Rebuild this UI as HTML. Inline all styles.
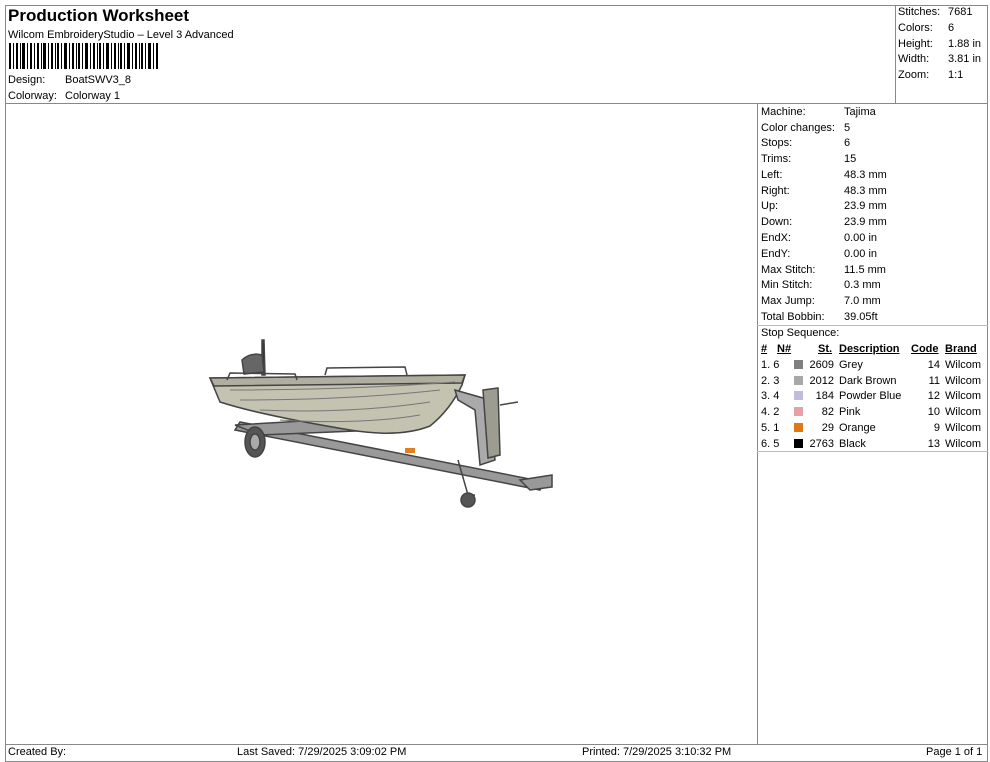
<!DOCTYPE html>
<html><head><meta charset="utf-8"><style>
body{margin:0;width:990px;height:762px;background:#fff;font-family:"Liberation Sans",Arial,sans-serif;color:#000;position:relative;overflow:hidden}
.a{position:absolute;font-size:11px;line-height:16px;white-space:nowrap}
.l{position:absolute;background:#888}
</style></head><body>
<div class="l" style="left:5px;top:5px;width:983px;height:1px"></div>
<div class="l" style="left:5px;top:5px;width:1px;height:757px"></div>
<div class="l" style="left:987px;top:5px;width:1px;height:757px"></div>
<div class="l" style="left:5px;top:103px;width:983px;height:1px"></div>
<div class="l" style="left:895px;top:5px;width:1px;height:98px"></div>
<div class="l" style="left:757px;top:103px;width:1px;height:641px"></div>
<div class="l" style="left:5px;top:744px;width:983px;height:1px"></div>
<div class="l" style="left:5px;top:761px;width:983px;height:1px"></div>
<div class="l" style="left:757px;top:325px;width:231px;height:1px;background:#bbb"></div>
<div class="l" style="left:757px;top:451px;width:231px;height:1px;background:#bbb"></div>

<div class="a" style="left:8px;top:6px;font-size:17px;font-weight:bold;line-height:20px">Production Worksheet</div>
<div class="a" style="left:8px;top:27px">Wilcom EmbroideryStudio – Level 3 Advanced</div>
<svg style="position:absolute;left:9px;top:43px" width="150" height="26">
<g fill="#000">
<rect x="0" y="0" width="2" height="26"/><rect x="4" width="1" height="26"/><rect x="7" width="2" height="26"/><rect x="11" width="1" height="26"/><rect x="13" width="3" height="26"/><rect x="18" width="1" height="26"/><rect x="21" width="2" height="26"/><rect x="25" width="1" height="26"/><rect x="28" width="2" height="26"/><rect x="32" width="1" height="26"/><rect x="34" width="3" height="26"/><rect x="39" width="1" height="26"/><rect x="42" width="2" height="26"/><rect x="46" width="1" height="26"/><rect x="48" width="2" height="26"/><rect x="52" width="1" height="26"/><rect x="55" width="3" height="26"/><rect x="60" width="1" height="26"/><rect x="63" width="2" height="26"/><rect x="67" width="1" height="26"/><rect x="69" width="2" height="26"/><rect x="73" width="1" height="26"/><rect x="76" width="3" height="26"/><rect x="81" width="1" height="26"/><rect x="84" width="2" height="26"/><rect x="88" width="1" height="26"/><rect x="90" width="2" height="26"/><rect x="94" width="1" height="26"/><rect x="97" width="3" height="26"/><rect x="102" width="1" height="26"/><rect x="105" width="2" height="26"/><rect x="109" width="1" height="26"/><rect x="111" width="2" height="26"/><rect x="115" width="1" height="26"/><rect x="118" width="3" height="26"/><rect x="123" width="1" height="26"/><rect x="126" width="2" height="26"/><rect x="130" width="1" height="26"/><rect x="132" width="2" height="26"/><rect x="136" width="1" height="26"/><rect x="139" width="3" height="26"/><rect x="144" width="1" height="26"/><rect x="147" width="2" height="26"/>
</g></svg>
<div class="a" style="left:8px;top:72px">Design:</div><div class="a" style="left:65px;top:72px">BoatSWV3_8</div>
<div class="a" style="left:8px;top:88px">Colorway:</div><div class="a" style="left:65px;top:88px">Colorway 1</div>

<div class="a" style="left:898px;top:4px">Stitches:</div><div class="a" style="left:948px;top:4px">7681</div>
<div class="a" style="left:898px;top:20px">Colors:</div><div class="a" style="left:948px;top:20px">6</div>
<div class="a" style="left:898px;top:36px">Height:</div><div class="a" style="left:948px;top:36px">1.88 in</div>
<div class="a" style="left:898px;top:51px">Width:</div><div class="a" style="left:948px;top:51px">3.81 in</div>
<div class="a" style="left:898px;top:67px">Zoom:</div><div class="a" style="left:948px;top:67px">1:1</div>

<div style="position:absolute;left:761px;top:104px">
<div class="a" style="top:0">Machine:</div><div class="a" style="left:83px;top:0">Tajima</div>
<div class="a" style="top:16px">Color changes:</div><div class="a" style="left:83px;top:16px">5</div>
<div class="a" style="top:31px">Stops:</div><div class="a" style="left:83px;top:31px">6</div>
<div class="a" style="top:47px">Trims:</div><div class="a" style="left:83px;top:47px">15</div>
<div class="a" style="top:63px">Left:</div><div class="a" style="left:83px;top:63px">48.3 mm</div>
<div class="a" style="top:79px">Right:</div><div class="a" style="left:83px;top:79px">48.3 mm</div>
<div class="a" style="top:94px">Up:</div><div class="a" style="left:83px;top:94px">23.9 mm</div>
<div class="a" style="top:110px">Down:</div><div class="a" style="left:83px;top:110px">23.9 mm</div>
<div class="a" style="top:126px">EndX:</div><div class="a" style="left:83px;top:126px">0.00 in</div>
<div class="a" style="top:142px">EndY:</div><div class="a" style="left:83px;top:142px">0.00 in</div>
<div class="a" style="top:158px">Max Stitch:</div><div class="a" style="left:83px;top:158px">11.5 mm</div>
<div class="a" style="top:173px">Min Stitch:</div><div class="a" style="left:83px;top:173px">0.3 mm</div>
<div class="a" style="top:189px">Max Jump:</div><div class="a" style="left:83px;top:189px">7.0 mm</div>
<div class="a" style="top:205px">Total Bobbin:</div><div class="a" style="left:83px;top:205px">39.05ft</div>
<div class="a" style="top:221px">Stop Sequence:</div>
</div>
<div style="position:absolute;left:0;top:341px;font-size:11px">
<div class="a" style="left:761px;top:0;font-weight:bold;text-decoration:underline">#</div>
<div class="a" style="left:777px;top:0;font-weight:bold;text-decoration:underline">N#</div>
<div class="a" style="left:818px;top:0;font-weight:bold;text-decoration:underline">St.</div>
<div class="a" style="left:839px;top:0;font-weight:bold;text-decoration:underline">Description</div>
<div class="a" style="left:911px;top:0;font-weight:bold;text-decoration:underline">Code</div>
<div class="a" style="left:945px;top:0;font-weight:bold;text-decoration:underline">Brand</div>
</div>
<div style="position:absolute;left:0;top:357px">
<div class="a" style="left:761px;top:0">1. 6</div><div style="position:absolute;left:794px;top:3px;width:9px;height:9px;background:#808080"></div><div class="a" style="left:806px;top:0;width:28px;text-align:right">2609</div><div class="a" style="left:839px;top:0">Grey</div><div class="a" style="left:910px;top:0;width:30px;text-align:right">14</div><div class="a" style="left:945px;top:0">Wilcom</div>
<div class="a" style="left:761px;top:16px">2. 3</div><div style="position:absolute;left:794px;top:19px;width:9px;height:9px;background:#a8a8a8"></div><div class="a" style="left:806px;top:16px;width:28px;text-align:right">2012</div><div class="a" style="left:839px;top:16px">Dark Brown</div><div class="a" style="left:910px;top:16px;width:30px;text-align:right">11</div><div class="a" style="left:945px;top:16px">Wilcom</div>
<div class="a" style="left:761px;top:31px">3. 4</div><div style="position:absolute;left:794px;top:34px;width:9px;height:9px;background:#c0bce0"></div><div class="a" style="left:806px;top:31px;width:28px;text-align:right">184</div><div class="a" style="left:839px;top:31px">Powder Blue</div><div class="a" style="left:910px;top:31px;width:30px;text-align:right">12</div><div class="a" style="left:945px;top:31px">Wilcom</div>
<div class="a" style="left:761px;top:47px">4. 2</div><div style="position:absolute;left:794px;top:50px;width:9px;height:9px;background:#e8a0a8"></div><div class="a" style="left:806px;top:47px;width:28px;text-align:right">82</div><div class="a" style="left:839px;top:47px">Pink</div><div class="a" style="left:910px;top:47px;width:30px;text-align:right">10</div><div class="a" style="left:945px;top:47px">Wilcom</div>
<div class="a" style="left:761px;top:63px">5. 1</div><div style="position:absolute;left:794px;top:66px;width:9px;height:9px;background:#e07818"></div><div class="a" style="left:806px;top:63px;width:28px;text-align:right">29</div><div class="a" style="left:839px;top:63px">Orange</div><div class="a" style="left:910px;top:63px;width:30px;text-align:right">9</div><div class="a" style="left:945px;top:63px">Wilcom</div>
<div class="a" style="left:761px;top:79px">6. 5</div><div style="position:absolute;left:794px;top:82px;width:9px;height:9px;background:#000"></div><div class="a" style="left:806px;top:79px;width:28px;text-align:right">2763</div><div class="a" style="left:839px;top:79px">Black</div><div class="a" style="left:910px;top:79px;width:30px;text-align:right">13</div><div class="a" style="left:945px;top:79px">Wilcom</div>
</div>

<svg style="position:absolute;left:200px;top:330px" width="360" height="190" viewBox="0 0 360 190">
<g stroke="#444" stroke-width="1.5" fill="#a8a89a">
<path d="M35 100 L340 160 L345 152 L40 92Z" fill="#999"/>
<path d="M35 95 L120 90 L180 100 L60 105Z" fill="#999"/>
<path d="M62 10 L64 10 L65 45 L62 45Z" fill="#333"/>
<path d="M42 30 Q50 22 62 25 L64 42 L44 44Z" fill="#666"/>
<path d="M10 48 L265 45 L262 55 Q250 80 230 96 Q200 108 150 100 Q60 85 20 72 Z" fill="#c4c2b0"/>
<path d="M10 48 L265 45 L262 53 L14 56Z" fill="#b0ae9e"/>
<path d="M125 45 L127 38 L205 37 L207 45" fill="none"/>
<path d="M27 50 L30 43 L95 44 L97 50" fill="none"/>
<path d="M40 70 Q150 70 240 60 M60 80 Q150 84 230 72 M30 60 Q150 60 255 52 M80 90 Q160 95 220 85" fill="none" stroke="#777" stroke-width="1"/>
<ellipse cx="55" cy="112" rx="10" ry="15" fill="#555"/>
<ellipse cx="55" cy="112" rx="5" ry="8" fill="#aaa"/>
<path d="M255 60 L290 70 L295 130 L280 135 L275 80 L258 70Z" fill="#aaa"/>
<path d="M283 60 L298 58 L300 125 L288 128Z" fill="#9c9c90"/>
<path d="M300 75 L318 72" fill="none"/>
<path d="M258 130 L268 165 L275 165" fill="none"/>
<circle cx="268" cy="170" r="7" fill="#555"/>
<path d="M320 150 L352 145 L352 157 L330 160Z" fill="#999"/>
<rect x="205" y="118" width="10" height="5" fill="#e08020" stroke="none"/>
</g></svg>

<div class="a" style="left:8px;top:744px">Created By:</div>
<div class="a" style="left:237px;top:744px">Last Saved: 7/29/2025 3:09:02 PM</div>
<div class="a" style="left:582px;top:744px">Printed: 7/29/2025 3:10:32 PM</div>
<div class="a" style="left:926px;top:744px">Page 1 of 1</div>
</body></html>
